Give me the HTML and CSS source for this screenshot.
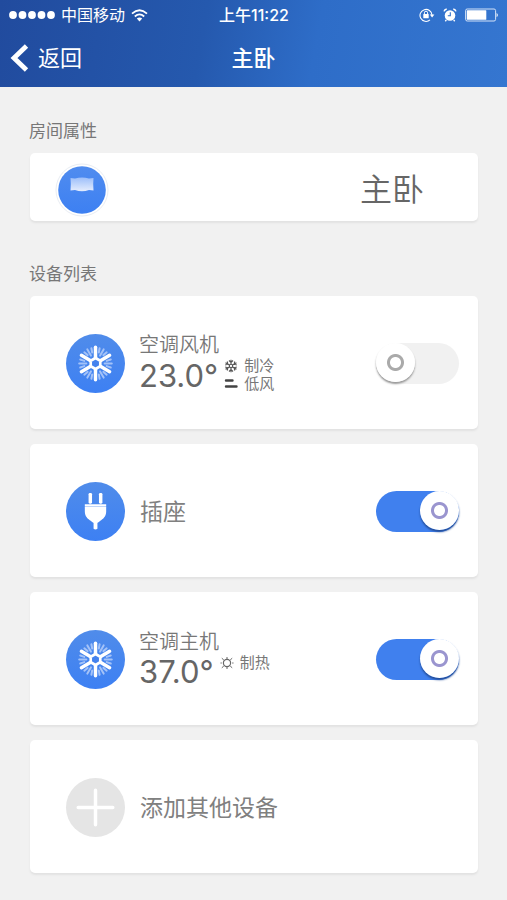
FILE: index.html
```html
<!DOCTYPE html>
<html lang="zh-CN">
<head>
<meta charset="utf-8">
<meta name="viewport" content="width=device-width, initial-scale=1">
<title>主卧</title>
<link rel="stylesheet" href="styles.css">
</head>
<body>
<svg class="defs" aria-hidden="true">
  <defs>
    <g id="arm"><path d="M0-9V-16M-4-15L-2.6-11M4-15L2.6-11"/></g>
    <g id="main-arm"><path d="M0-6V-16"/></g>
    <symbol id="snow" viewBox="-29 -29 58 58">
      <g fill="none" stroke="#fff" stroke-linecap="round">
        <g stroke="#a3c2f8" stroke-width="2">
          <use href="#arm" transform="rotate(30)"/><use href="#arm" transform="rotate(90)"/><use href="#arm" transform="rotate(150)"/><use href="#arm" transform="rotate(210)"/><use href="#arm" transform="rotate(270)"/><use href="#arm" transform="rotate(330)"/>
        </g>
        <g stroke-width="3.4">
          <use href="#main-arm"/><use href="#main-arm" transform="rotate(60)"/><use href="#main-arm" transform="rotate(120)"/><use href="#main-arm" transform="rotate(180)"/><use href="#main-arm" transform="rotate(240)"/><use href="#main-arm" transform="rotate(300)"/>
        </g>
        <path d="M0-5.4L4.7-2.7V2.7L0 5.4L-4.7 2.7V-2.7Z" fill="#4482ee" stroke-width="2.6" stroke-linejoin="round"/>
      </g>
    </symbol>
  </defs>
</svg>

<header class="header">
  <div class="status">
    <div class="carrier">
      <svg width="46" height="10" viewBox="0 0 46 10" fill="#fff" aria-hidden="true"><circle cx="4" cy="5" r="3.9"/><circle cx="13.5" cy="5" r="3.9"/><circle cx="23" cy="5" r="3.9"/><circle cx="32.5" cy="5" r="3.9"/><circle cx="42" cy="5" r="3.9"/></svg>
      <span>中国移动</span>
      <svg width="17" height="13" viewBox="0 0 17 13" aria-hidden="true"><g fill="none" stroke="#fff" stroke-width="1.8"><path d="M1 4.6Q8.5-2 16 4.6"/><path d="M3.8 7.5Q8.5 3.3 13.2 7.5"/></g><path d="M5.8 9.4Q8.5 7.4 11.2 9.4L8.5 12.4Z" fill="#fff"/></svg>
    </div>
    <time class="clock">上午11:22</time>
    <div class="indicators">
      <svg width="16" height="14" viewBox="0 0 16 14" aria-hidden="true"><path d="M11 11.9A6 6 0 1 1 13 7" fill="none" stroke="#fff" stroke-width="1.1"/><path d="M10.8 6.5H15.4L13.1 9.5Z" fill="#fff"/><rect x="4.3" y="6" width="5.4" height="4.2" rx=".5" fill="#fff"/><path d="M5.4 6V4.8A1.6 1.6 0 0 1 8.6 4.8V6" fill="none" stroke="#fff"/></svg>
      <svg width="14" height="14" viewBox="0 0 14 14" aria-hidden="true"><circle cx="7" cy="7.5" r="5.3" fill="#fff"/><path d="M1 3.4Q1.5 1.4 3.7 1M10.3 1Q12.5 1.4 13 3.4M3.3 12L2.3 13.2M10.7 12L11.7 13.2" fill="none" stroke="#fff" stroke-width="1.4"/><path d="M7.3 4.3V7.7H4.8" fill="none" stroke="#3070cb" stroke-width="1.1"/></svg>
      <svg width="34" height="14" viewBox="0 0 34 14" aria-hidden="true"><rect x=".6" y="1" width="30" height="12" rx="1.6" fill="none" stroke="#d3e2f7"/><rect x="1.8" y="2.2" width="19.5" height="9.6" rx=".6" fill="#fff"/><path d="M31.6 4.7Q34 7 31.6 9.3Z" fill="#fff"/></svg>
    </div>
  </div>
  <nav class="nav">
    <a class="back" href="#">
      <svg width="20" height="30" viewBox="0 0 20 30" aria-hidden="true"><path d="M16.5 3L4 15L16.5 27" fill="none" stroke="#fff" stroke-width="4.8"/></svg>
      <span>返回</span>
    </a>
    <h1 class="title">主卧</h1>
  </nav>
</header>

<main class="content">
  <h2 class="label">房间属性</h2>
  <section class="card room">
    <svg class="room-icon" width="56" height="56" viewBox="-28 -28 56 56" aria-hidden="true">
      <defs>
        <linearGradient id="blue" x2="0" y2="1"><stop stop-color="#508cef"/><stop offset="1" stop-color="#3d80f2"/></linearGradient>
        <linearGradient id="pillow" x2="0" y2="1"><stop stop-color="#9dbffa"/><stop offset="1" stop-color="#e5edfd"/></linearGradient>
      </defs>
      <circle r="26" fill="#fff" stroke="#e9edf3"/><circle r="23.8" fill="url(#blue)"/>
      <path d="M-11.5-12L-7-11.4Q0-13.4 7-11.4L11.5-12L11.2-6L11.5 .4L7 0Q0 2.6 -7 0L-11.5 .4L-11.2-6Z" fill="url(#pillow)"/>
    </svg>
    <span class="room-name">主卧</span>
  </section>

  <h2 class="label devices-label">设备列表</h2>
  <ul class="devices">
    <li class="card device">
      <svg class="device-icon" width="59" height="59" aria-hidden="true"><use href="#snow"/></svg>
      <div class="climate">
        <label class="climate-name" for="fan">空调风机</label>
        <div class="reading">
          <span class="degrees">23.0°</span>
          <div class="modes">
            <span class="mode"><svg width="14" height="14" viewBox="-7 -7 14 14" aria-hidden="true"><g fill="none" stroke="#555" stroke-width="1.1"><path d="M0-6.3V6.3M-5.5-3.2L5.5 3.2M-5.5 3.2L5.5-3.2M-2-5.5L0-3.5L2-5.5M-2 5.5L0 3.5L2 5.5M-5.8-1L-3.1-1.8L-3.8-4.5M5.8 1L3.1 1.8L3.8 4.5M-5.8 1L-3.1 1.8L-3.8 4.5M5.8-1L3.1-1.8L3.8-4.5"/><circle r="1.7" fill="#fff"/></g></svg>制冷</span>
            <span class="mode"><svg width="14" height="14" viewBox="0 0 14 14" aria-hidden="true"><path d="M2 3.5H8.5M2 9.5H12.5" stroke="#444" stroke-width="2.4" stroke-linecap="round"/></svg>低风</span>
          </div>
        </div>
      </div>
      <input class="switch" id="fan" type="checkbox" role="switch">
    </li>
    <li class="card device">
      <svg class="device-icon" width="59" height="59" viewBox="-29 -29 58 58" aria-hidden="true"><g fill="#fff"><rect x="-6.8" y="-18.2" width="3.4" height="10.5" rx="1.3"/><rect x="3.4" y="-18.2" width="3.4" height="10.5" rx="1.3"/><path d="M-10.5-7.2H10.5V-5.4H-10.5ZM-10.5-4.4H10.5V0C10.5 5 7.5 7.2 4.4 9.4C3.2 10.4 2.6 10.8 1.9 11.3V17Q0 18.6-1.9 17V11.3C-2.6 10.8-3.2 10.4-4.4 9.4C-7.5 7.2-10.5 5-10.5 0Z"/><rect x="-10.5" y="-5.6" width="21" height="1.4" opacity=".65"/></g></svg>
      <label class="device-name" for="socket">插座</label>
      <input class="switch" id="socket" type="checkbox" role="switch" checked>
    </li>
    <li class="card device">
      <svg class="device-icon" width="59" height="59" aria-hidden="true"><use href="#snow"/></svg>
      <div class="climate">
        <label class="climate-name" for="host">空调主机</label>
        <div class="reading">
          <span class="degrees">37.0°</span>
          <div class="modes single">
            <span class="mode"><svg width="14" height="14" viewBox="-7 -7 14 14" aria-hidden="true"><g fill="none" stroke="#666"><circle r="3.6" stroke-width="1.2"/><path d="M0-4V-6M0 4V6M-3.2-3L-5.2-4.8M3.2-3L5.2-4.8M-3.2 3L-5.2 4.8M3.2 3L5.2 4.8M-5.2 0H-6.5M5.2 0H6.5"/></g></svg>制热</span>
          </div>
        </div>
      </div>
      <input class="switch" id="host" type="checkbox" role="switch" checked>
    </li>
    <li>
      <button class="card device add" type="button">
        <svg class="device-icon add-icon" width="59" height="59" viewBox="-29 -29 58 58" aria-hidden="true"><path d="M0-17V17M-17 0H17" stroke="#fff" stroke-width="3.4" stroke-linecap="round"/></svg>
        <span class="device-name">添加其他设备</span>
      </button>
    </li>
  </ul>
</main>
</body>
</html>
```
FILE: styles.css
```css
* {
  box-sizing: border-box;
}

body {
  margin: 0;
  min-height: 100vh;
  background: #f1f1f1;
  color: #666;
  font-family: Inter, "Noto Sans CJK SC", sans-serif;
}

svg {
  display: block;
  flex: none;
}

.defs {
  position: absolute;
  width: 0;
  height: 0;
}

.header {
  height: 87px;
  color: #fff;
  background: linear-gradient(100deg, #214b9e 0%, #2559ae 40%, #2e6dc8 62%, #3576d0 100%);
}

.status,
.nav {
  display: grid;
  grid-template-columns: 1fr auto 1fr;
  align-items: center;
}

.status {
  height: 30px;
  padding: 0 8px 0 9px;
  font-size: 16px;
  line-height: 24px;
}

.carrier,
.indicators,
.back {
  display: flex;
  align-items: center;
}

.carrier {
  gap: 6px;
}

.clock {
  font-weight: 500;
}

.indicators {
  justify-content: flex-end;
  gap: 8px;
}

.nav {
  height: 56px;
  padding: 0 10px;
}

.back {
  gap: 8px;
  color: inherit;
  font-size: 22px;
  line-height: 32px;
  text-decoration: none;
}

.title {
  margin: 0;
  font-size: 22px;
  line-height: 32px;
  font-weight: 500;
}

.content {
  padding: 32px 29px 26px;
}

.label {
  margin: 0 0 10px;
  color: #777;
  font-size: 17px;
  line-height: 24px;
  font-weight: 400;
}

.card {
  display: flex;
  align-items: center;
  width: 100%;
  border: 0;
  border-radius: 5px;
  background: #fff;
  box-shadow: 0 2px 2px #e2e2e2;
}

.room,
.devices {
  margin: 0 0 0 1px;
}

.room {
  width: auto;
  justify-content: space-between;
  height: 68px;
  padding: 6px 54px 0 24px;
}

.room-name {
  font-size: 32px;
  line-height: 48px;
  font-weight: 350;
}

.devices-label {
  margin-top: 41px;
}

.devices {
  display: flex;
  flex-direction: column;
  gap: 15px;
  padding: 0;
  list-style: none;
}

.device {
  height: 133px;
  padding: 2px 18px 0 36px;
  gap: 15px;
}

.device-icon {
  border-radius: 50%;
  background: linear-gradient(#508cea, #3d80f3);
}

.add-icon {
  background: #e5e5e5;
}

.device-name {
  color: #808080;
  font-size: 23px;
  line-height: 34px;
}

.climate {
  margin-left: -1px;
}

.climate-name {
  display: block;
  color: #777;
  font-size: 20px;
  line-height: 24px;
  font-weight: 350;
}

.reading {
  display: flex;
  align-items: center;
  gap: 6px;
}

.degrees {
  font-size: 31px;
  line-height: 30px;
  font-weight: 400;
}

.modes {
  display: flex;
  flex-direction: column;
  padding-bottom: 2px;
  color: #777;
  font-size: 15px;
  line-height: 18px;
}

.single {
  padding-bottom: 18px;
}

.mode {
  display: flex;
  align-items: center;
  gap: 6px;
}

.switch {
  display: flex;
  appearance: none;
  width: 83px;
  height: 41px;
  margin: 0 1px 0 auto;
  border-radius: 21px;
  background: #f1f1f1;
  cursor: pointer;
}

.switch::before {
  content: "";
  width: 39px;
  height: 39px;
  border-radius: 50%;
  background: radial-gradient(circle, #fff 5px, #aaa 6px, #aaa 8px, #fff 9px);
  box-shadow: 0 2px 2px #999;
}

.switch:checked {
  justify-content: flex-end;
  background: #4080ee;
}

.switch:checked::before {
  background: radial-gradient(circle, #fff 5px, #9a95cf 6px, #9a95cf 8px, #fff 9px);
  box-shadow: 0 2px 2px #234d98;
}

.add {
  font-family: inherit;
  text-align: left;
  cursor: pointer;
}
```
